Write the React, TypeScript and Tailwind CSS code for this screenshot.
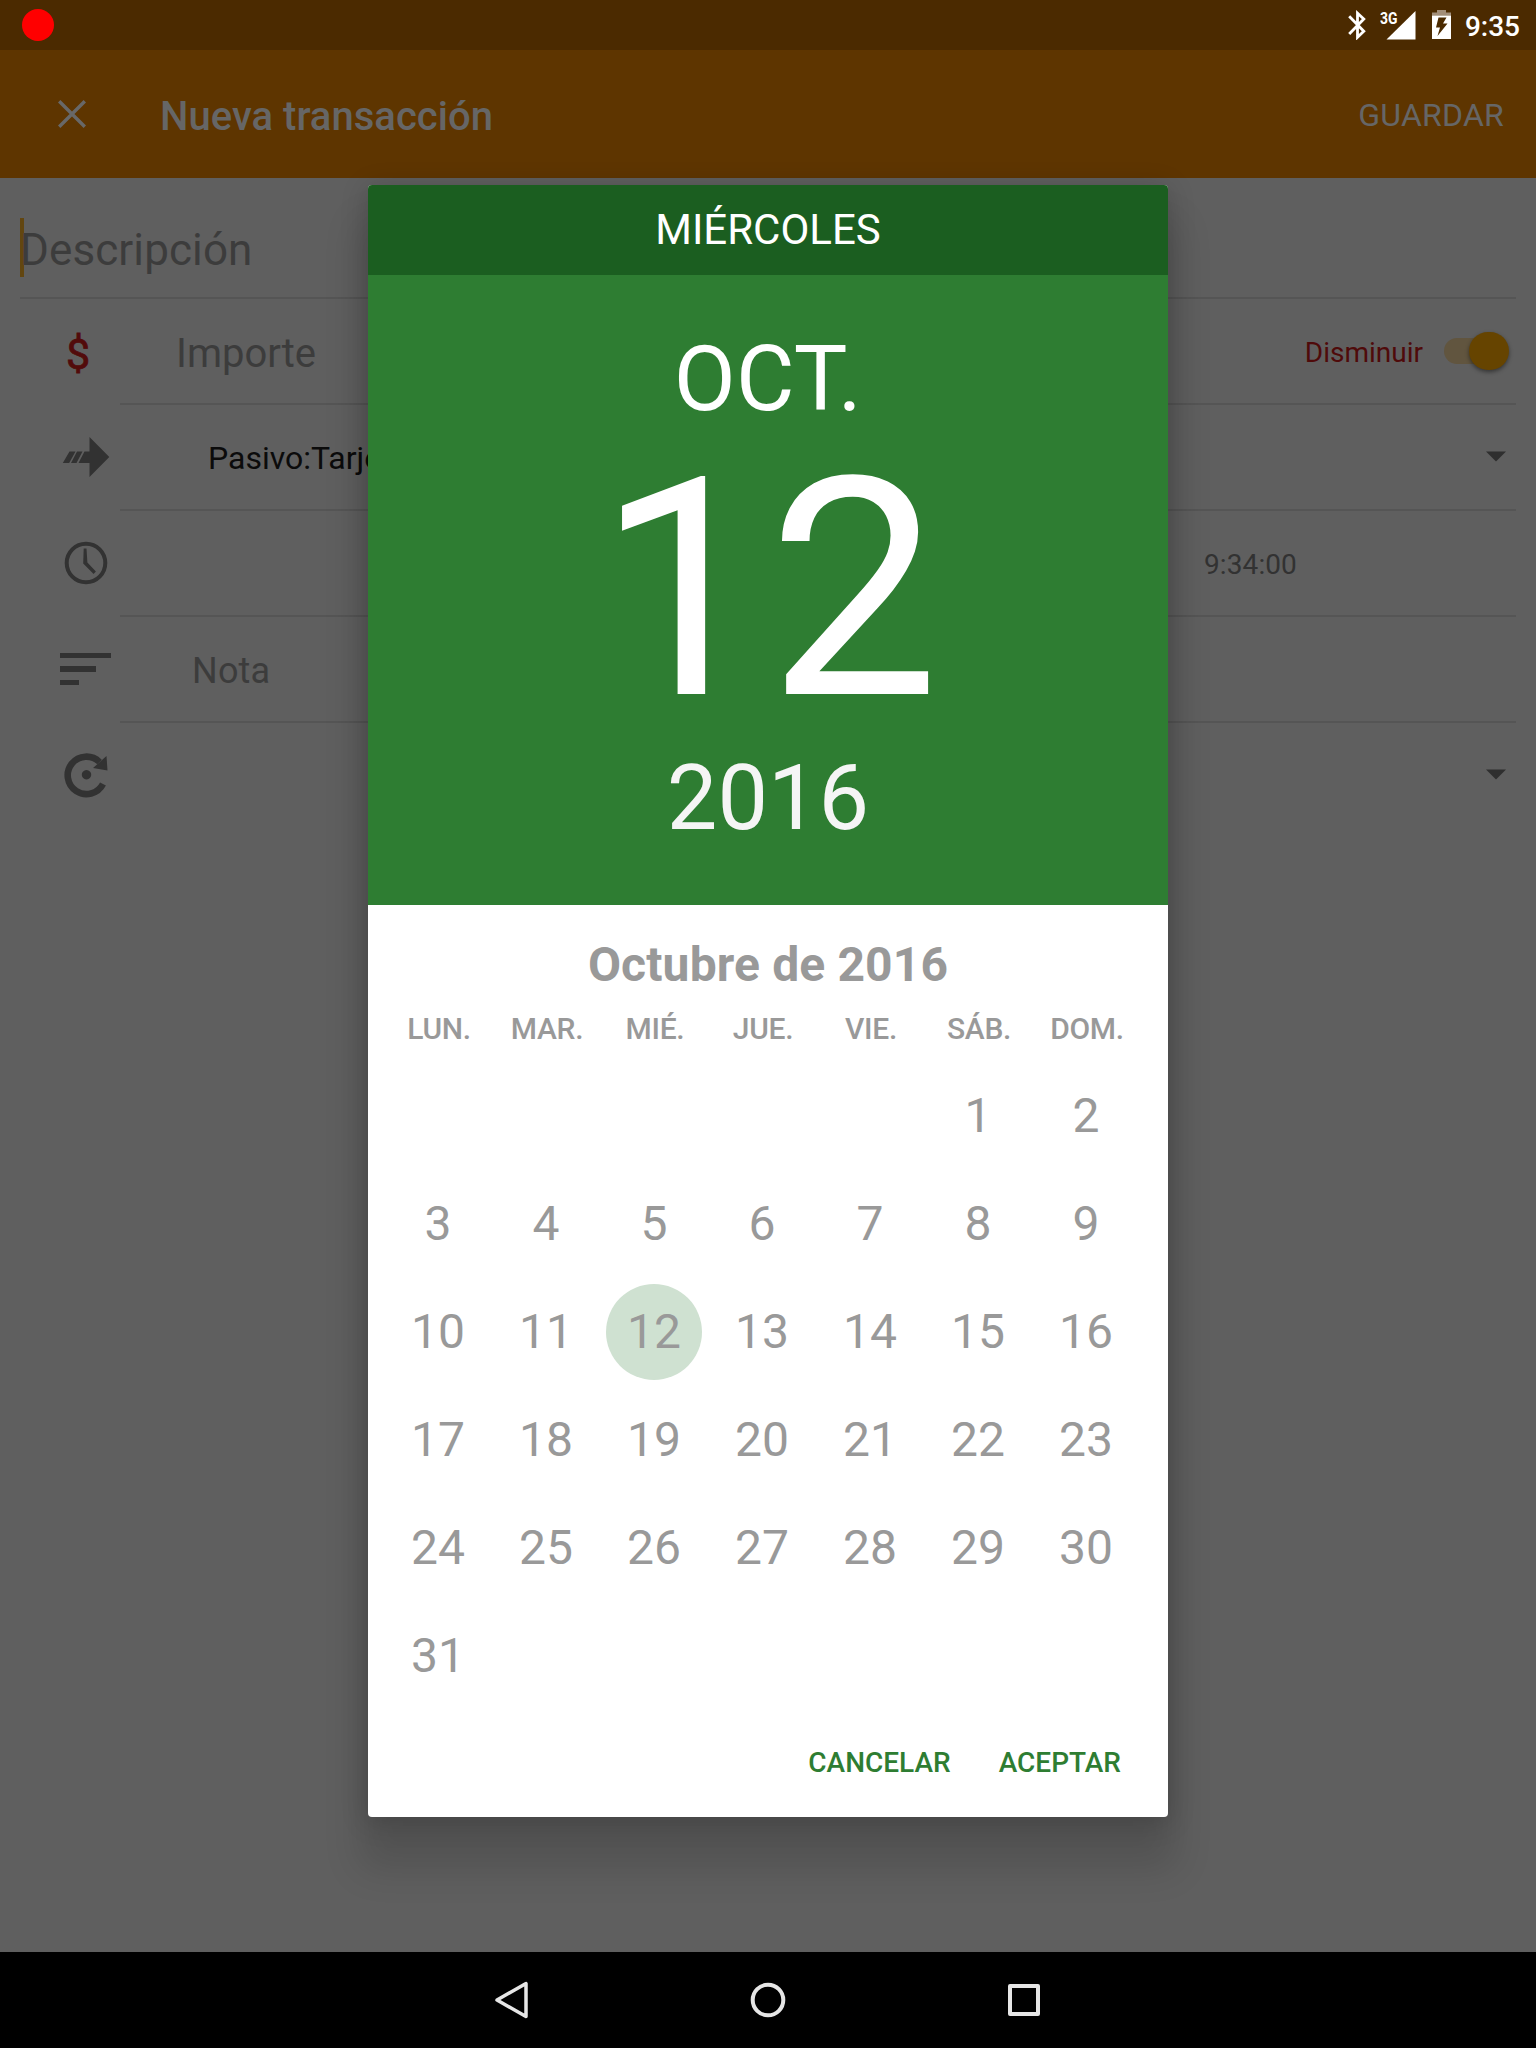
import React from "react";

const WEEKDAYS = ["LUN.", "MAR.", "MIÉ.", "JUE.", "VIE.", "SÁB.", "DOM."];
const LEADING_BLANKS = 5;
const SELECTED = 12;

function StatusBar() {
  return (
    <div className="flex h-[50px] items-start justify-between bg-[#4b2a00] text-white">
      <div className="mt-[9px] ml-[22px] h-8 w-8 rounded-full bg-[#ff0000]" />
      <div className="flex h-[50px] items-start pr-4">
        <svg className="mt-[10px] h-[30px] w-[18px]" viewBox="0 0 18 30" fill="none" stroke="white" strokeWidth="2.800">
          <path d="M1.200 6.200 L15.800 21.300 L9.500 27.300 V3.200 L15.800 9 L1.200 24" />
        </svg>
        <svg className="mt-[10px] ml-[14px] h-[30px] w-9" viewBox="0 0 36 30">
          <path d="M6.500 29.500 L35.500 1 V29.500 Z" fill="white" />
          <text x="0" y="13.500" fontSize="16" fontWeight="700" fontFamily="Roboto" fill="white" textLength="17.500" lengthAdjust="spacingAndGlyphs">3G</text>
        </svg>
        <svg className="mt-[10px] ml-4 h-[29px] w-[19px]" viewBox="0 0 19 29">
          <path d="M5 0 H14 V2.500 H19 V5.500 H0 V2.500 H5 Z" fill="#a28e79" />
          <path fillRule="evenodd" d="M0 5.500 H19 V29 H0 Z M6.500 7.500 L4 17.500 H8 L5.500 26 L15.500 13.500 H11 L14.500 7.500 Z" fill="white" />
        </svg>
        <span className="ml-[14px] pt-[2px] text-[28px] leading-[50px] font-medium">9:35</span>
      </div>
    </div>
  );
}

function AppBar() {
  return (
    <div className="flex h-32 items-center bg-[#5e3500] text-[#666666]">
      <svg className="ml-[58px] h-7 w-7" viewBox="0 0 28 28" stroke="#686868" strokeWidth="3.400">
        <path d="M1.200 1.200 L26.800 26.800 M26.800 1.200 L1.200 26.800" />
      </svg>
      <h1 className="ml-[74px] pt-[5px] text-[40px] leading-none font-medium tracking-[0.03px]">Nueva transacción</h1>
      <span className="ml-auto pt-[2px] pr-8 text-[32px] leading-none tracking-[0.25px]">GUARDAR</span>
    </div>
  );
}

function Row({ icon, children, last }: { icon: React.ReactNode; children?: React.ReactNode; last?: boolean }) {
  return (
    <div className="flex h-[106px] pr-5">
      <div className="w-[120px] shrink-0">{icon}</div>
      <div className={last ? "flex flex-1 items-center pb-[2px]" : "flex flex-1 items-center border-b-2 border-[#555555]"}>{children}</div>
    </div>
  );
}

function Caret() {
  return (
    <svg className="mr-[10px] mb-[2px] ml-auto h-[11px] w-5" viewBox="0 0 20 11">
      <path d="M0 0.500 H20 L10 10.500 Z" fill="#2f2f2f" />
    </svg>
  );
}

function Form() {
  return (
    <div className="flex-1 bg-[#5f5f5f]">
      <div className="mx-5 flex h-[121px] items-start border-b-2 border-[#555555]">
        <div className="mt-10 h-[59px] w-1 bg-[#624610]" />
        <span className="-ml-1 pt-10 text-[44px] leading-[64px] tracking-[0.1px] text-[#3c3c3c]">Descripción</span>
      </div>
      <Row icon={<div className="pt-[5px] pl-[66px] text-[43px] leading-[100px] text-[#520b0b] [-webkit-text-stroke:0.8px_#520b0b]">$</div>}>
        <span className="pt-[6px] pl-14 text-[40px] leading-none text-[#3c3c3c]">Importe</span>
        <span className="ml-auto pt-[3px] text-[28px] leading-none text-[#4f0a0a]">Disminuir</span>
        <div className="relative mr-1.5 ml-[21px] h-[26px] w-[66px]">
          <div className="h-[26px] w-[54px] rounded-full bg-[#61553f]" />
          <div className="absolute -top-[6px] left-[25px] h-[38px] w-10 rounded-full bg-[#664400] shadow-[0_2px_4px_rgba(0,0,0,0.45)]" />
        </div>
      </Row>
      <Row
        icon={
          <svg className="mt-8 ml-[62px] h-10 w-12" viewBox="0 0 48 40" fill="#323232">
            <path d="M27.500 0 L47.300 20 L27.500 40 V26 H16.500 L22.500 14.500 H27.500 Z" />
            <path d="M7.500 14.500 H13.500 L7.200 26 H0.800 Z M15 14.500 H20.500 L14.500 26 H9 Z" />
          </svg>
        }
      >
        <span className="pt-[2px] pl-[88px] text-[32px] leading-none text-[#0b0b0b]">Pasivo:Tarjeta de Crédito</span>
        <Caret />
      </Row>
      <Row
        icon={
          <svg className="mt-[30px] ml-16 h-11 w-11" viewBox="0 0 44 44" fill="none" stroke="#323232">
            <circle cx="22" cy="22" r="19.300" strokeWidth="4" />
            <path d="M19.700 7.500 h2.800 l0.900 13.900 l8.500 9.200 l-2.300 2.300 L19.200 22.500 Z" fill="#323232" stroke="none" />
          </svg>
        }
      >
        <span className="pt-[4px] pl-[1084px] text-[28px] leading-none tracking-[0.1px] text-[#323232]">9:34:00</span>
      </Row>
      <Row
        icon={
          <div className="flex flex-col gap-[8px] pt-9 pl-[60px]">
            <div className="h-[5px] w-[51px] bg-[#323232]" />
            <div className="h-[6px] w-9 bg-[#323232]" />
            <div className="h-[5px] w-[19px] bg-[#323232]" />
          </div>
        }
      >
        <span className="pt-[3px] pl-[72px] text-[36px] leading-none tracking-[0.2px] text-[#3c3c3c]">Nota</span>
      </Row>
      <Row
        last
        icon={
          <svg className="mt-[29px] ml-16 h-12 w-11" viewBox="0 0 44 48">
            <path d="M39 32 A18.700 18.700 0 1 1 35.500 10" fill="none" stroke="#323232" strokeWidth="6.600" />
            <path d="M42.500 4 L43.500 18.500 L29 16 Z M22.500 18 a4.700 4.700 0 1 0 0.010 0 Z" fill="#323232" />
          </svg>
        }
      >
        <Caret />
      </Row>
    </div>
  );
}

function DatePicker() {
  return (
    <div className="absolute top-[185px] left-[368px] flex h-[1632px] w-[800px] flex-col rounded-[4px] bg-white shadow-[0_44px_36px_9px_rgba(0,0,0,0.13),0_4px_28px_rgba(0,0,0,0.2)]">
      <div className="h-[90px] rounded-t-[4px] bg-[#1b5e20] text-center text-[42px] leading-[90px] text-white">MIÉRCOLES</div>
      <div className="flex h-[630px] flex-col items-center bg-[#2e7d32] text-white">
        <span className="pt-[50px] text-[90px] leading-[110px] tracking-[0.3px]">OCT.</span>
        <span className="text-[305px] leading-[310px]">12</span>
        <span className="-mt-px text-[90px] leading-[110px] text-[#f5f5f5]">2016</span>
      </div>
      <div className="pt-[30px] text-center text-[48px] leading-[60px] font-bold tracking-[0.13px] text-[#999999]">Octubre de 2016</div>
      <div className="ml-[17px] grid w-[756px] grid-cols-7 text-center text-[#999999]">
        {WEEKDAYS.map((d) => (
          <span key={d} className="pt-[14px] text-[30px] leading-[40px] font-medium tracking-[-0.3px]">{d}</span>
        ))}
      </div>
      <div className="mt-[13px] ml-4 grid w-[756px] grid-cols-7 text-[48px] text-[#999999]">
        {Array.from({ length: LEADING_BLANKS }, (_, i) => (
          <span key={"b" + i} />
        ))}
        {Array.from({ length: 31 }, (_, i) => i + 1).map((n) => (
          <div key={n} className="flex h-[108px] items-center justify-center">
            <div className={n === SELECTED ? "flex h-24 w-24 items-center justify-center rounded-full bg-[#cfe1d1]" : ""}>{n}</div>
          </div>
        ))}
      </div>
      <div className="mt-auto mb-[34px] flex justify-end gap-12 pr-[47px] text-[28px] leading-10 font-medium text-[#2e7d32]">
        <span>CANCELAR</span>
        <span>ACEPTAR</span>
      </div>
    </div>
  );
}

function NavBar() {
  return (
    <div className="flex h-24 items-center justify-center bg-black">
      <svg className="h-24 w-64" viewBox="0 0 256 96" fill="none" stroke="#e6e6e6" strokeWidth="4" strokeLinejoin="round">
        <path d="M113 48 L142 31.500 V64.500 Z" strokeWidth="3.500" />
      </svg>
      <svg className="h-24 w-64" viewBox="0 0 256 96" fill="none" stroke="#e6e6e6" strokeWidth="4">
        <circle cx="128" cy="48" r="15.300" />
      </svg>
      <svg className="h-24 w-64" viewBox="0 0 256 96" fill="none" stroke="#e6e6e6" strokeWidth="4" strokeLinejoin="round">
        <rect x="114" y="34" width="28" height="28" />
      </svg>
    </div>
  );
}

export default function App() {
  return (
    <div className="relative flex h-[2048px] w-[1536px] flex-col overflow-hidden font-['Roboto',sans-serif]">
      <StatusBar />
      <AppBar />
      <Form />
      <NavBar />
      <DatePicker />
    </div>
  );
}
